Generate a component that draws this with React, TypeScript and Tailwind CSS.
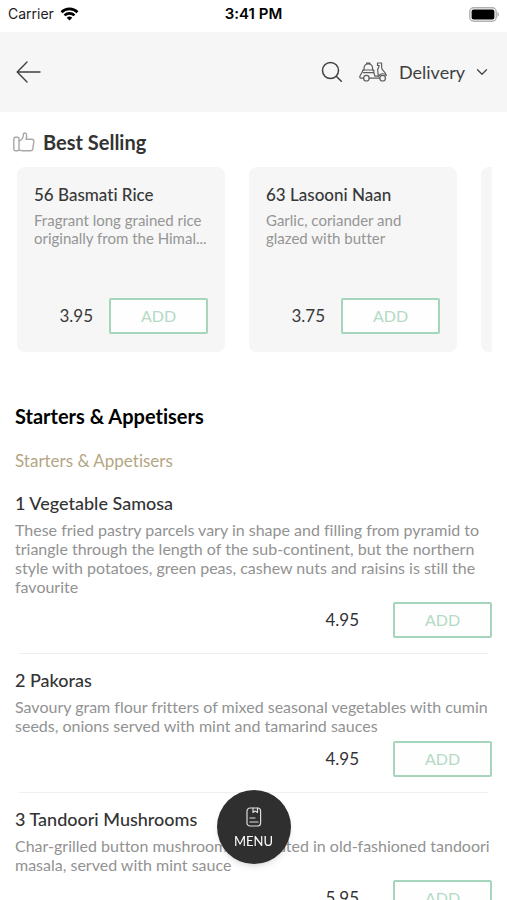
import { ChevronDown } from "lucide-react"

type Dish = {
  name: string
  description: string
  price: string
}

const bestSellers: Dish[] = [
  { name: "56 Basmati Rice", description: "Fragrant long grained rice originally from the Himal...", price: "3.95" },
  { name: "63 Lasooni Naan", description: "Garlic, coriander and glazed with butter", price: "3.75" },
]

const starters: Dish[] = [
  {
    name: "1 Vegetable Samosa",
    description:
      "These fried pastry parcels vary in shape and filling from pyramid to triangle through the length of the sub-continent, but the northern style with potatoes, green peas, cashew nuts and raisins is still the favourite",
    price: "4.95",
  },
  {
    name: "2 Pakoras",
    description:
      "Savoury gram flour fritters of mixed seasonal vegetables with cumin seeds, onions served with mint and tamarind sauces",
    price: "4.95",
  },
  {
    name: "3 Tandoori Mushrooms",
    description:
      "Char-grilled button mushrooms marinated in old-fashioned tandoori masala, served with mint sauce",
    price: "5.95",
  },
]

function StatusBar() {
  return (
    <div className="grid h-8 shrink-0 grid-cols-3 items-center px-2 pb-1 font-[Inter,sans-serif] text-sm text-[#1c1c1c]">
      <div className="flex items-center gap-1.5">
        <span>Carrier</span>
        <svg width="19" height="14" viewBox="0 0 18 14" fill="none" stroke="#000" strokeWidth="2.6" aria-hidden="true">
          <path d="M1 5.2a11.4 11.4 0 0 1 16 0" />
          <path d="M4 8.4a7.1 7.1 0 0 1 10 0" />
          <path d="M9 13.6 6.2 10.8a4 4 0 0 1 5.6 0z" fill="#000" stroke="none" />
        </svg>
      </div>
      <span className="text-center text-[15px] font-semibold text-black">3:41 PM</span>
      <svg className="justify-self-end" width="30" height="15" viewBox="0 0 30 15" aria-hidden="true">
        <rect x="0.8" y="0.8" width="26.4" height="13.4" rx="4" fill="#fff" stroke="#b0b0b0" strokeWidth="1.4" />
        <rect x="2.6" y="2.6" width="22.8" height="9.8" rx="2" fill="#000" />
        <path d="M28.4 5v5c1-.4 1.6-1.3 1.6-2.5S29.4 5.4 28.4 5z" fill="#b0b0b0" />
      </svg>
    </div>
  )
}

function ScooterIcon() {
  return (
    <svg
      width="28"
      height="20"
      viewBox="0 0 28 20"
      fill="none"
      stroke="#5c5c5c"
      strokeWidth="1.2"
      strokeLinecap="round"
      strokeLinejoin="round"
      aria-hidden="true"
    >
      {/* delivery box and seat */}
      <path d="M5 8V6.500C5 3.500 6.500 2 9.300 2s4.300 1.500 4.300 4.500V8M7.600 2.200V1h3.400v1.200" />
      <path d="M3.600 8h11.200v2.600H4.400" />
      {/* body, footboard and front column */}
      <path d="M4 8.500 1 14c-.5 1.300 0 2.200 1.200 2.200h2.400M14.800 10.600l1.200 3.600h3.400L18.600 8l1.600-4.500h-1.700V1h4.100v4.500c0 3.200 3.900 4 4.600 7.800M10.200 16.200h10.600" />
      <circle cx="7.4" cy="16.2" r="2.8" />
      <circle cx="23.6" cy="16.2" r="2.8" />
      <path d="M19.600 14.200c1.300-3 5.900-3.200 7.600-.9" />
    </svg>
  )
}

function Header() {
  return (
    <header className="flex h-20 shrink-0 items-center justify-between bg-[#f6f6f6] px-4 text-[#404040]">
      <button type="button" aria-label="Back">
        <svg
          width="25"
          height="22"
          viewBox="0 0 25 22"
          fill="none"
          stroke="currentColor"
          strokeWidth="1.4"
          strokeLinecap="round"
          strokeLinejoin="round"
        >
          <path d="M24 11H1.500M11 1 1.200 11 11 21" />
        </svg>
      </button>
      <div className="flex items-center">
        <button type="button" aria-label="Search" className="mr-4">
          <svg
            width="22"
            height="22"
            viewBox="0 0 22 22"
            fill="none"
            stroke="currentColor"
            strokeWidth="1.5"
            strokeLinecap="round"
          >
            <circle cx="9.5" cy="9.5" r="8" />
            <path d="m15.300 15.300 5 5" />
          </svg>
        </button>
        <button type="button" className="flex items-center text-lg">
          <ScooterIcon />
          <span className="mr-2 ml-3">Delivery</span>
          <ChevronDown size={18} strokeWidth={1.6} />
        </button>
      </div>
    </header>
  )
}

function AddButton({ dish }: { dish: Dish }) {
  return (
    <button
      type="button"
      aria-label={`ADD ${dish.name}`}
      className="h-9 w-[99px] rounded-xs border-2 border-[#a5d6bb] bg-[#fdfefd] text-base text-[#b4dac5]"
    >
      ADD
    </button>
  )
}

function BestSellerCard({ dish }: { dish: Dish }) {
  return (
    <article className="flex h-[185px] w-52 shrink-0 flex-col rounded-lg bg-[#f6f6f6] px-[17px] pt-4 pb-[18px]">
      <h3 className="text-[17px] leading-6 font-medium text-[#383838]">{dish.name}</h3>
      <p className="mt-1 text-[15px] leading-[18px] text-[#959595]">{dish.description}</p>
      <div className="mt-auto flex items-center justify-end gap-4">
        <span className="text-[17px] text-[#383838]">{dish.price}</span>
        <AddButton dish={dish} />
      </div>
    </article>
  )
}

function MenuItem({ dish }: { dish: Dish }) {
  return (
    <li className="group">
      <div className="mx-1 h-px bg-[#f0f0f0] group-first:bg-transparent" />
      <h4 className="pt-3 text-lg font-medium text-[#333]">{dish.name}</h4>
      <p className="mt-[3px] text-base leading-[19px] text-[#929292]">{dish.description}</p>
      <div className="mt-1.5 flex items-center justify-end gap-[34px] pb-[15px]">
        <span className="text-[17px] text-[#333]">{dish.price}</span>
        <AddButton dish={dish} />
      </div>
    </li>
  )
}

export default function App() {
  return (
    <div className="flex h-screen flex-col overflow-hidden bg-white font-[Lato,sans-serif] [font-variant-ligatures:none]">
      <StatusBar />
      <Header />
      <main className="flex-1 overflow-y-auto px-[15px] [scrollbar-width:none]">
        <section>
          <h2 className="flex h-[55px] items-center gap-2 pt-1 text-xl font-bold text-[#333]">
            <svg
              className="-ml-0.5"
              width="22"
              height="20"
              viewBox="0 0 22 20"
              fill="none"
              stroke="#a8a8a8"
              strokeWidth="1.4"
              strokeLinejoin="round"
              aria-hidden="true"
            >
              <rect x="0.8" y="5.2" width="5.2" height="13.6" rx="1.6" />
              <path d="M6 9c3-1 4.400-3.500 4.400-6.500C10.400.6 13 .5 13.500 2.500c.4 1.500 0 3.200-.5 4.700h5.500c1.800 0 2.500 1.200 2.300 2.600l-1 7c-.2 1.200-1 2-2.200 2H9c-1.200 0-1.800-.8-3-.8" />
            </svg>
            Best Selling
          </h2>
          <div className="flex gap-6 overflow-x-auto pl-0.5 [scrollbar-width:none]">
            {bestSellers.map((dish) => (
              <BestSellerCard key={dish.name} dish={dish} />
            ))}
            <article className="w-52 shrink-0 rounded-lg bg-[#f6f6f6]" />
          </div>
        </section>

        <section className="pt-[50px]">
          <h2 className="text-xl font-bold text-black">Starters &amp; Appetisers</h2>
          <h3 className="mt-[17px] text-[17px] leading-7 text-[#b5a684]">Starters &amp; Appetisers</h3>
          <ul className="mt-px">
            {starters.map((dish) => (
              <MenuItem key={dish.name} dish={dish} />
            ))}
          </ul>
        </section>
      </main>

      <button
        type="button"
        className="fixed bottom-9 left-1/2 flex size-[74px] -translate-x-1/2 flex-col items-center justify-center gap-1 rounded-full bg-[#2f2f2f] pt-1 text-[13px] leading-5 text-white shadow-md"
      >
        <svg
          width="16"
          height="20"
          viewBox="0 0 16 20"
          fill="none"
          stroke="#ddd"
          strokeWidth="1.2"
          strokeLinejoin="round"
          strokeLinecap="round"
          aria-hidden="true"
        >
          <rect x="1" y="1" width="13.6" height="18" rx="3" />
          <path d="M7 1v4.500L9.200 4l2.300 1.500V1M4 11h5M4 15h8" />
        </svg>
        MENU
      </button>
    </div>
  )
}
